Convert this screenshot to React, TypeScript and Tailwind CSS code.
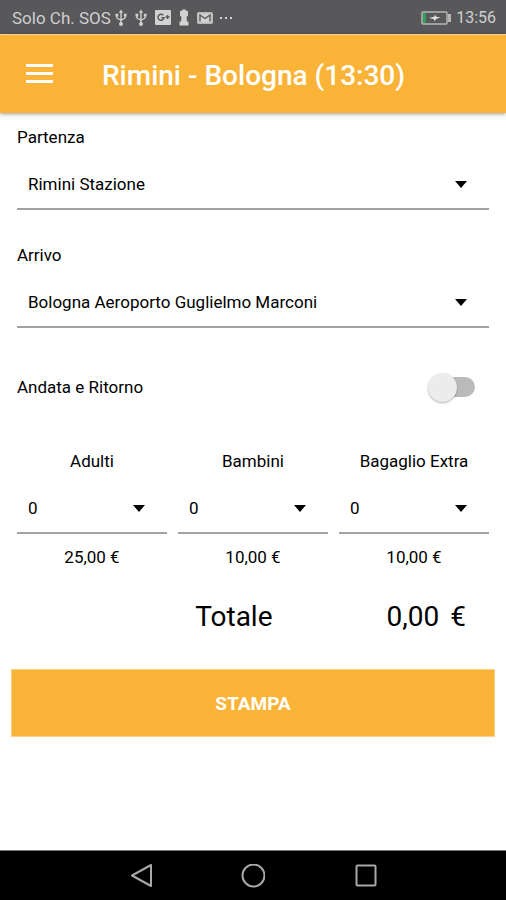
import { useId, useState } from 'react';

type SelectFieldProps = {
  id: string;
  options: string[];
};

function SelectField({ id, options }: SelectFieldProps) {
  return (
    <div className="relative w-full">
      <select
        id={id}
        className="block h-[50px] w-full appearance-none rounded-none border-b-2 border-[#a3a3a3] bg-transparent pr-12 pl-[11px] text-[17px] text-black outline-none"
      >
        {options.map((option) => (
          <option key={option}>{option}</option>
        ))}
      </select>
      <svg
        viewBox="0 0 12 7"
        className="pointer-events-none absolute top-[21px] right-[22px] h-[7px] w-3"
        aria-hidden="true"
      >
        <path d="M0 0h12L6 7z" fill="#000" />
      </svg>
    </div>
  );
}

function UsbIcon() {
  return (
    <svg viewBox="0 0 12 18" className="h-[18px] w-3" fill="none" stroke="#cfcfcf" strokeWidth="1.4" aria-hidden="true">
      <path d="M6 3v11M1.800 6.500v2c0 1.600 4.200 1.600 4.200 3.200M10.200 6.500v2c0 1.600-4.200 1.600-4.200 3.200" />
      <path d="M6 0.500l2.200 3.200H3.800z" fill="#cfcfcf" stroke="none" />
      <circle cx="6" cy="15" r="2" fill="#cfcfcf" stroke="none" />
      <path d="M0.500 4.800h2.800v2.800H0.500zM8.800 4.800h2.800v2.800H8.800z" fill="#cfcfcf" stroke="none" />
    </svg>
  );
}

function StatusBar() {
  return (
    <div className="flex h-[34px] items-center justify-between bg-[#58585a] pt-px pr-[10px] pl-3 text-[17px] text-[#cfcfcf]">
      <div className="flex items-center">
        <span>Solo Ch. SOS</span>
        <div className="ml-1 flex items-center gap-2">
          <UsbIcon />
          <UsbIcon />
          <svg viewBox="0 0 16 15" className="h-[15px] w-4" aria-hidden="true">
            <rect width="16" height="15" rx="1" fill="#d2d2d2" />
            <path d="M8.300 5.300A3 3 0 1 0 9 7.700H6.500M10.500 7h4M12.500 5v4" fill="none" stroke="#58585a" strokeWidth="1.500" />
          </svg>
          {/* Serratura */}
          <svg viewBox="0 0 10 17" className="h-[17px] w-[10px]" fill="#d2d2d2" aria-hidden="true">
            <path d="M3.500 0.500h3L7.500 2h1.500v4.500L7.500 8l0.500 4.500h1.500v4h-9v-4H2L2.500 8 1 6.500V2h1.500z" />
          </svg>
          <svg viewBox="0 0 16 12" className="h-3 w-4" aria-hidden="true">
            <rect x="0.700" y="0.700" width="14.600" height="10.600" rx="1" fill="#d2d2d2" stroke="#b8b8b8" strokeWidth="1.400" />
            <path d="M3 9.500V3L8 6.500 13 3v6.500" fill="none" stroke="#58585a" strokeWidth="1.400" />
          </svg>
        </div>
        <svg viewBox="0 0 14 4" className="ml-[6px] h-1 w-[14px]" fill="#cfcfcf" aria-hidden="true">
          <path d="M1 1h2v2H1zM6 1h2v2H6zM11 1h2v2h-2z" />
        </svg>
      </div>
      <div className="flex items-center gap-[5px]">
        <svg viewBox="0 0 30 14" className="h-[14px] w-[30px]" aria-hidden="true">
          <rect x="1" y="1" width="25" height="12" rx="1" fill="none" stroke="#b5b5b5" strokeWidth="1.500" />
          <rect x="2" y="2" width="3" height="10" fill="#2f9e5b" />
          <rect x="27" y="3" width="3" height="8" fill="#b5b5b5" />
          <path d="M8 7l5.500-1.500 0.500-2 1.500 2.500h4l-5 2.500-0.500 2-1.500-2.500z" fill="#e0e0e0" />
        </svg>
        <span className="text-base">13:56</span>
      </div>
    </div>
  );
}

const tickets = [
  { label: 'Adulti', price: '25,00 €' },
  { label: 'Bambini', price: '10,00 €' },
  { label: 'Bagaglio Extra', price: '10,00 €' }
];

export default function App() {
  const formId = useId();
  const [roundTrip, setRoundTrip] = useState(false);

  return (
    <div className="flex min-h-screen flex-col bg-white font-[Roboto,sans-serif] text-[17px] leading-6 text-black">
      <StatusBar />

      <header className="flex h-[79px] items-center border-t border-[#f5d294] bg-[#f9b437] pl-[26px] text-white shadow-[0_1px_4px_rgba(0,0,0,0.4)]">
        <button type="button" aria-label="Menu" className="flex w-[27px] flex-col gap-[5px] pb-[2px]">
          <span className="h-[3px] w-full bg-white" />
          <span className="h-[3px] w-full bg-white" />
          <span className="h-[3px] w-full bg-white" />
        </button>
        <h1 className="ml-[49px] pt-1 text-[28px] leading-8 font-medium">Rimini - Bologna (13:30)</h1>
      </header>

      <main className="flex-1 pt-3">
        <div className="px-[17px]">
          <div className="flex flex-col gap-[33px]">
            <div className="flex flex-col gap-[11px]">
              <label htmlFor={`${formId}-from`}>Partenza</label>
              <SelectField id={`${formId}-from`} options={['Rimini Stazione']} />
            </div>
            <div className="flex flex-col gap-[11px]">
              <label htmlFor={`${formId}-to`}>Arrivo</label>
              <SelectField id={`${formId}-to`} options={['Bologna Aeroporto Guglielmo Marconi']} />
            </div>
          </div>

          {/* Andata e ritorno */}
          <label className="mt-[47px] flex h-6 items-center justify-between pr-[14px]">
            <span>Andata e Ritorno</span>
            <span className="relative flex h-[30px] w-[47px] items-center justify-end">
              <input
                type="checkbox"
                role="switch"
                checked={roundTrip}
                onChange={(e) => setRoundTrip(e.target.checked)}
                className="peer h-5 w-[42px] appearance-none rounded-full bg-[#bababa] checked:bg-[#fbd999]"
              />
              <span className="pointer-events-none absolute left-0 size-[29px] rounded-full bg-[#ececec] shadow-[0_1px_2px_rgba(0,0,0,0.3)] peer-checked:left-[18px] peer-checked:bg-[#f9b437]" />
            </span>
          </label>

          {/* Biglietti */}
          <div className="mt-[50px] grid grid-cols-3 gap-[11px]">
            {tickets.map((ticket, index) => (
              <div key={ticket.label} className="flex flex-col items-center gap-[11px]">
                <label htmlFor={`${formId}-${index}`}>{ticket.label}</label>
                <SelectField id={`${formId}-${index}`} options={['0', '1', '2', '3', '4', '5']} />
                <span>{ticket.price}</span>
              </div>
            ))}
          </div>

          <div className="mt-7 flex items-center justify-end gap-[114px] pr-[23px] text-[28px] leading-10">
            <span>Totale</span>
            <span className="flex gap-[11px]">
              <span>0,00</span>
              <span>€</span>
            </span>
          </div>
        </div>

        <div className="mt-8 mb-6 px-[11px]">
          <button
            type="button"
            className="h-[68px] w-full border border-[#fbd08a] bg-[#f9b437] pt-[2px] text-[19px] font-bold text-white"
          >
            STAMPA
          </button>
        </div>
      </main>

      {/* Barra di navigazione */}
      <nav className="flex h-[50px] items-center justify-center gap-[88px] border-t border-[#777777] bg-black">
        <button type="button" aria-label="Indietro">
          <svg viewBox="0 0 24 24" className="size-6" fill="none" stroke="#a8a8a8" strokeWidth="2" strokeLinejoin="round">
            <path d="M22 1v21L3 11.500z" />
          </svg>
        </button>
        <button type="button" aria-label="Home">
          <svg viewBox="0 0 24 24" className="size-6" fill="none" stroke="#a8a8a8" strokeWidth="2">
            <circle cx="12.500" cy="11.500" r="11" />
          </svg>
        </button>
        <button type="button" aria-label="Recenti">
          <svg viewBox="0 0 24 24" className="size-6" fill="none" stroke="#a8a8a8" strokeWidth="2">
            <rect x="3.500" y="1.500" width="19" height="20" rx="1" />
          </svg>
        </button>
      </nav>
    </div>
  );
}
